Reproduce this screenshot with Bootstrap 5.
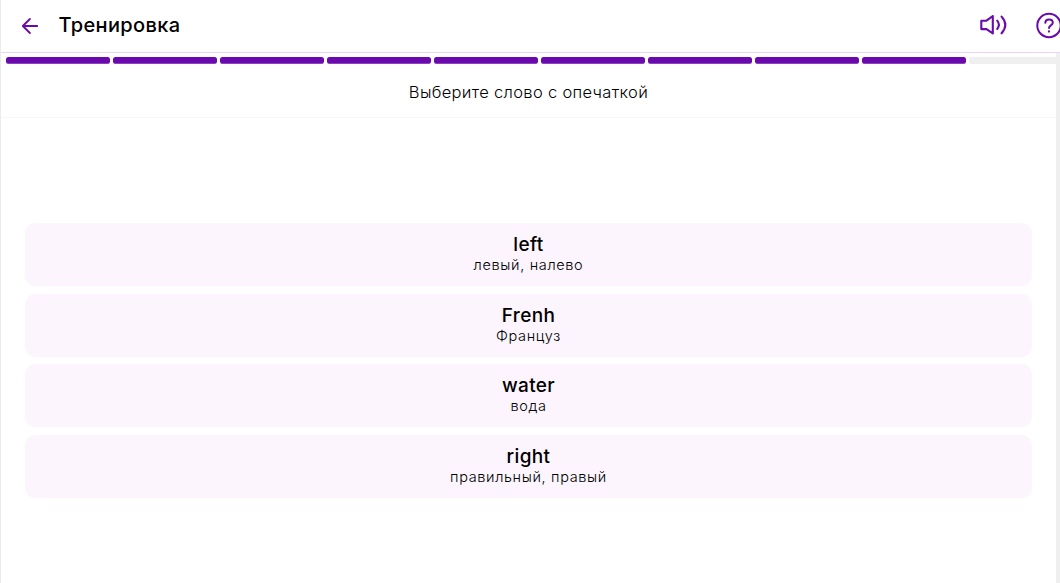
<!DOCTYPE html>
<html lang="ru">
<head>
  <meta charset="UTF-8" />
  <title>Тренировка</title>
  <meta name="viewport" content="width=device-width, initial-scale=1" />
  <link href="https://cdn.jsdelivr.net/npm/bootstrap@5.3.3/dist/css/bootstrap.min.css" rel="stylesheet" />

  <style>
    :root {
      --violet: #6a0aad;
    }

    body {
      height: 100vh;
      font-family: Inter, "Liberation Sans", sans-serif;
      color: #000;
      background-color: #fff;
      border-left: 1px solid #ebebeb;
      overflow: hidden;
    }

    .topbar {
      height: 53px;
      padding-left: 17px;
      border-bottom: 1px solid #e6d5f3;
      color: var(--violet);
    }

    .topbar h1 {
      font-size: 20px;
      font-weight: 500;
      line-height: 24px;
      letter-spacing: 0.35px;
      margin-left: 16.5px;
      margin-top: -2px;
      color: #000;
    }

    .topbar-icons {
      gap: 26px;
      margin-right: -3px;
    }

    .steps {
      height: 15px;
      padding: 4px 0 0 5px;
      gap: 2.6px;
      background: linear-gradient(#efefef, #efefef) right / 4px 100% no-repeat;
    }

    .step {
      flex: 0 0 104.4px;
      height: 7px;
      border-radius: 2.5px;
      background-color: #efefef;
    }

    .step.done {
      background-color: var(--violet);
      border-bottom: 1px solid #8c43c0;
    }

    .training {
      height: 515px;
      border-right: 4px solid #efefef;
    }

    .task {
      height: 50px;
      font-size: 16.5px;
      font-weight: 300;
      line-height: 24px;
      letter-spacing: 0.32px;
      padding-top: 12px;
      border-bottom: 1px solid #f6f6f6;
    }

    .answers {
      padding: 105px 24px 0;
      gap: 7.7px;
    }

    .answer {
      height: 63px;
      padding: 0 0 0.2px;
      border: 0;
      border-radius: 10px;
      background-color: #fcf5fd;
      color: #000;
    }

    .answer-word {
      font-size: 19px;
      font-weight: 500;
      line-height: 21px;
      letter-spacing: 0.35px;
    }

    .answer-translation {
      font-size: 14.5px;
      font-weight: 300;
      line-height: 20px;
      letter-spacing: 0.65px;
    }
  </style>
</head>
<body>
  <!-- Header -->
  <header class="topbar d-flex align-items-center">
    <svg width="24" height="24" viewBox="0 0 24 24" fill="none" stroke="currentColor" stroke-width="1.8" stroke-linecap="round" stroke-linejoin="round">
      <path d="M19.2 12H4.8M11.9 5L4.8 12l7.1 7" />
    </svg>
    <h1 class="mb-0">Тренировка</h1>

    <div class="topbar-icons d-flex align-items-center ms-auto">
      <svg width="30" height="28" viewBox="0 0 30 28" fill="none" stroke="currentColor" stroke-width="2.1" stroke-linecap="round" stroke-linejoin="round">
        <path d="M2.3 8.7H7.5L13.8 4V21.4L7.5 17.1H2.3Z" />
        <path d="M18.2 8.7Q21.6 12.8 18.2 17" />
        <path d="M22.6 4.6Q30 12.8 22.6 21.3" />
      </svg>
      <svg width="28" height="28" viewBox="0 0 28 28" fill="none" stroke="currentColor" stroke-width="2" stroke-linecap="round" stroke-linejoin="round">
        <circle cx="14" cy="13.5" r="11.7" />
        <path d="M10.3 10.7C10.5 6.2 17.8 6.4 17.8 10.7C17.8 13.4 14 13.2 14 15.9" />
        <path d="M14 19.4v.2" stroke-width="2.2" />
      </svg>
    </div>
  </header>

  <!-- Progress -->
  <div class="steps d-flex">
    <div class="step done"></div>
    <div class="step done"></div>
    <div class="step done"></div>
    <div class="step done"></div>
    <div class="step done"></div>
    <div class="step done"></div>
    <div class="step done"></div>
    <div class="step done"></div>
    <div class="step done"></div>
    <div class="step"></div>
  </div>

  <!-- Task -->
  <main class="training">
    <div class="task text-center">Выберите слово с опечаткой</div>

    <div class="answers d-flex flex-column">
      <button type="button" class="answer w-100 text-center">
        <span class="answer-word d-block">left</span>
        <span class="answer-translation d-block">левый, налево</span>
      </button>
      <button type="button" class="answer w-100 text-center">
        <span class="answer-word d-block">Frenh</span>
        <span class="answer-translation d-block">Француз</span>
      </button>
      <button type="button" class="answer w-100 text-center">
        <span class="answer-word d-block">water</span>
        <span class="answer-translation d-block">вода</span>
      </button>
      <button type="button" class="answer w-100 text-center">
        <span class="answer-word d-block">right</span>
        <span class="answer-translation d-block">правильный, правый</span>
      </button>
    </div>
  </main>

  <script src="https://cdn.jsdelivr.net/npm/bootstrap@5.3.3/dist/js/bootstrap.bundle.min.js"></script>
</body>
</html>
